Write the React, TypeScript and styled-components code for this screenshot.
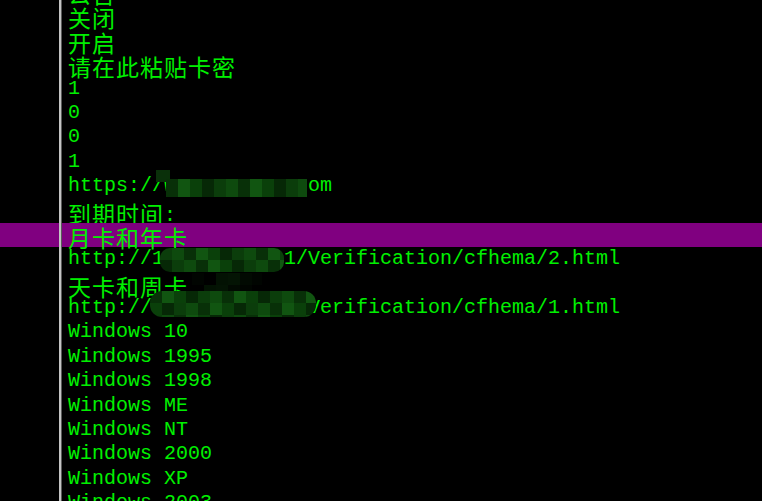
import React from "react";
import styled, { createGlobalStyle } from "styled-components";

const Global = createGlobalStyle`
  html, body { margin: 0; padding: 0; background: #000; }
  body { overflow: hidden; width: 762px; height: 501px; }
`;

const Screen = styled.div`
  position: relative;
  width: 762px;
  height: 501px;
  overflow: hidden;
  background: #000;
`;

const List = styled.div`
  display: flex;
  flex-direction: column;
  margin-top: -21px;
`;

const Row = styled.div<{ $selected?: boolean }>`
  display: flex;
  height: 24.4px;
  background: ${(p) => (p.$selected ? "#800080" : "transparent")};
`;

const Gutter = styled.div`
  flex: 0 0 59px;
  border-right: 2px solid #c4c4c4;
  box-shadow: 1px 0 0 #5a5a5a;
`;

const Text = styled.div`
  padding-left: 7px;
  color: #00f000;
  font-family: "Liberation Mono", monospace;
  font-size: 20px;
  line-height: 24.4px;
  white-space: pre;
`;

const Cjk = styled.span`
  font-family: "Noto Sans CJK SC", sans-serif;
  font-size: 23px;
  letter-spacing: 1px;
  line-height: 29px;
  vertical-align: top;
`;

const Half = styled.span`
  font-family: "Liberation Mono", monospace;
  font-size: 20px;
  letter-spacing: 0;
  vertical-align: 2px;
`;

const Mosaic = styled.svg`
  position: absolute;
  display: block;
`;

type Line = { text: string; cjk?: boolean; selected?: boolean };

const lines: Line[] = [
  { text: "公告", cjk: true },
  { text: "关闭", cjk: true },
  { text: "开启", cjk: true },
  { text: "请在此粘贴卡密", cjk: true },
  { text: "1" },
  { text: "0" },
  { text: "0" },
  { text: "1" },
  { text: "https://w         .com" },
  { text: "到期时间:", cjk: true },
  { text: "月卡和年卡", cjk: true, selected: true },
  { text: "http://1          1/Verification/cfhema/2.html" },
  { text: "天卡和周卡", cjk: true },
  { text: "http://            /Verification/cfhema/1.html" },
  { text: "Windows 10" },
  { text: "Windows 1995" },
  { text: "Windows 1998" },
  { text: "Windows ME" },
  { text: "Windows NT" },
  { text: "Windows 2000" },
  { text: "Windows XP" },
  { text: "Windows 2003" },
];

const renderText = (l: Line) => {
  if (!l.cjk) return l.text;
  const m = l.text.match(/^(.*?)(:?)$/);
  return (
    <Cjk>
      {m ? m[1] : l.text}
      {m && m[2] ? <Half>{m[2]}</Half> : null}
    </Cjk>
  );
};

const blocks = (cols: number, rows: number, palette: string[], seed: number) => {
  const out: string[] = [];
  let s = seed;
  for (let i = 0; i < cols * rows; i++) {
    s = (s * 9301 + 49297) % 233280;
    out.push(palette[s % palette.length]);
  }
  return out;
};

const greens = ["#0b3d0b", "#0e4a0e", "#083008", "#115511", "#0a400a", "#062806"];
const darks = ["#020a02", "#031203", "#010501", "#041404", "#000000"];

const MosaicBlob: React.FC<{
  x: number;
  y: number;
  w: number;
  h: number;
  cell: number;
  palette: string[];
  seed: number;
  r?: number;
}> = ({ x, y, w, h, cell, palette, seed, r = 0 }) => {
  const cols = Math.ceil(w / cell);
  const rows = Math.ceil(h / cell);
  const colors = blocks(cols, rows, palette, seed);
  const id = `clip${seed}`;
  return (
    <Mosaic width={w} height={h} style={{ left: x, top: y }}>
      <defs>
        <clipPath id={id}>
          <rect x={0} y={0} width={w} height={h} rx={r} ry={r} />
        </clipPath>
      </defs>
      <g clipPath={`url(#${id})`}>
        {colors.map((c, i) => (
          <rect
            key={i}
            x={(i % cols) * cell}
            y={Math.floor(i / cols) * cell}
            width={cell}
            height={cell}
            fill={c}
          />
        ))}
      </g>
    </Mosaic>
  );
};

export default function App() {
  return (
    <>
      <Global />
      <Screen>
        <List>
          {lines.map((l, i) => (
            <Row key={i} $selected={l.selected}>
              <Gutter />
              <Text>{renderText(l)}</Text>
            </Row>
          ))}
        </List>
        <MosaicBlob x={156} y={170} w={14} h={12} cell={12} palette={["#0a300a"]} seed={3} />
        <MosaicBlob x={166} y={179} w={141} h={18} cell={12} palette={greens} seed={7} />
        <MosaicBlob x={160} y={248} w={124} h={24} cell={12} palette={greens} seed={11} r={10} />
        <MosaicBlob x={192} y={273} w={70} h={18} cell={12} palette={darks} seed={5} />
        <MosaicBlob x={150} y={291} w={166} h={26} cell={12} palette={greens} seed={13} r={12} />
      </Screen>
    </>
  );
}
